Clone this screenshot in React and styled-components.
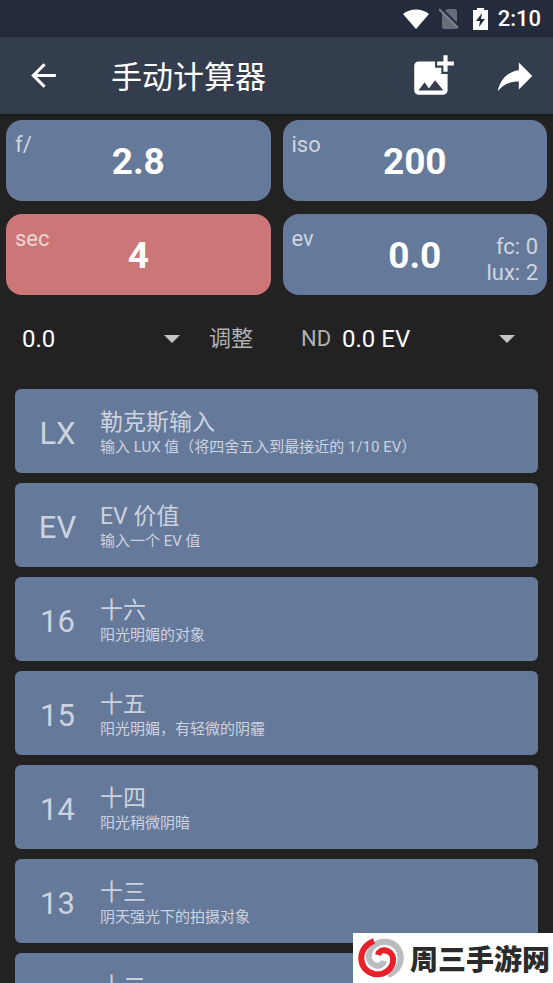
import React from 'react';
import styled, {createGlobalStyle} from 'styled-components';
import {MdAddPhotoAlternate, MdArrowBack} from 'react-icons/md';

const Color = {
    status: '#232b3c',
    bar: '#343d4e',
    page: '#222222',
    card: '#65799b',
    active: '#cb7777',
    soft: '#ccd3df',
    muted: '#b0b0b0'
};

const ROWS = [
    {code: 'LX', title: '勒克斯输入', text: '输入 LUX 值（将四舍五入到最接近的 1/10 EV）'},
    {code: 'EV', title: 'EV 价值', text: '输入一个 EV 值'},
    {code: '16', title: '十六', text: '阳光明媚的对象'},
    {code: '15', title: '十五', text: '阳光明媚，有轻微的阴霾'},
    {code: '14', title: '十四', text: '阳光稍微阴暗'},
    {code: '13', title: '十三', text: '阴天强光下的拍摄对象'},
    {code: '12', title: '十二', text: '阴天'}
];

const Caret = () => (
    <CaretIcon viewBox='0 0 16 8' aria-hidden='true'>
        <path d='M0 0h16L8 8z' fill='#c4c4c4'/>
    </CaretIcon>
);

const StatusIcons = () => (
    <>
        <svg width='26' height='20' viewBox='0 0 26 20' aria-hidden='true'>
            <path d='M0 5C7-1 19-1 26 5L13 20z' fill='#fff'/>
        </svg>
        <svg width='24' height='22' viewBox='0 0 24 22' aria-hidden='true'>
            <path d='M8 1h8q2 0 2 2v16q0 2-2 2H5q-2 0-2-2V6z' fill='#666c78'/>
            <path d='M2 0l18 18' stroke={Color.status} strokeWidth='2'/>
            <path d='M0 1l19 19' stroke='#7b808a' strokeWidth='2'/>
        </svg>
        <svg width='15' height='22' viewBox='0 0 15 22' aria-hidden='true'>
            <path d='M4 0h7v2h4v20H0V2h4z' fill='#fff'/>
            <path d='M9 5L3 13h4l-1 6 6-8H8z' fill={Color.status}/>
        </svg>
    </>
);

const Swirl = () => (
    <svg width='48' height='40' viewBox='0 0 48 40' fill='none' aria-hidden='true'>
        <path d='M31 37C48 31 48 8 31 4 20 2 11 10 12 20c1 8 13 11 15 3' stroke='#b9bdbf' strokeWidth='6'/>
        <path d='M17 3C0 9 0 32 17 36c11 2 20-6 19-16-1-8-13-11-15-3' stroke='#fff' strokeWidth='8'/>
        <path d='M31 37C48 31 48 8 31 4 20 2 11 10 12 20c1 8 13 11 15 3' stroke='#b9bdbf' strokeWidth='5'/>
        <path d='M17 3C0 9 0 32 17 36c11 2 20-6 19-16-1-8-13-11-15-3' stroke='#e8202a' strokeWidth='6'/>
    </svg>
);

const App = () => (
    <Page>
        <GlobalStyle/>
        <StatusBar>
            <StatusIcons/>
            <Clock>2:10</Clock>
        </StatusBar>
        <AppBar>
            <IconButton aria-label='返回'><MdArrowBack size={37}/></IconButton>
            <Heading>手动计算器</Heading>
            <IconButton aria-label='添加图片'><MdAddPhotoAlternate size={50}/></IconButton>
            <IconButton aria-label='分享'>
                <svg width='46' height='46' viewBox='0 0 24 24'>
                    <path d='M14 9V5l7 7-7 7v-4.1c-5 0-8.5 1.6-11 5.1 1-5 4-10 11-11z' fill='#fff'/>
                </svg>
            </IconButton>
        </AppBar>
        <Readings>
            <Reading><Unit>f/</Unit><Value>2.8</Value></Reading>
            <Reading><Unit>iso</Unit><Value>200</Value></Reading>
            <Reading $active><Unit>sec</Unit><Value>4</Value></Reading>
            <Reading>
                <Unit>ev</Unit>
                <Value>0.0</Value>
                <Extra>fc: 0<br/>lux: 2</Extra>
            </Reading>
        </Readings>
        <Adjust>
            <Picker>
                <Select id='adjust'><option>0.0</option></Select>
                <Caret/>
            </Picker>
            <Label htmlFor='adjust'>调整</Label>
            <Label htmlFor='nd'>ND</Label>
            <Picker>
                <Select id='nd'><option>0.0 EV</option></Select>
                <Caret/>
            </Picker>
        </Adjust>
        <List>
            {ROWS.map(row => (
                <Row key={row.code}>
                    <Code>{row.code}</Code>
                    <span>
                        <RowTitle>{row.title}</RowTitle>
                        <RowText>{row.text}</RowText>
                    </span>
                </Row>
            ))}
        </List>
        <Watermark>
            <Swirl/>
            周三手游网
        </Watermark>
    </Page>
);

export default App;

const GlobalStyle = createGlobalStyle`
    * {
        box-sizing: border-box;
    }
    body {
        margin: 0;
        background: ${Color.page};
        font-family: Roboto, "Noto Sans CJK SC", sans-serif;
        color: #fff;
    }
`;

const Page = styled.div`
    display: flex;
    flex-direction: column;
    height: 100vh;
    overflow: hidden;
`;

const StatusBar = styled.div`
    flex: none;
    display: flex;
    align-items: center;
    justify-content: flex-end;
    gap: 10px;
    height: 37px;
    padding-right: 12px;
    background: ${Color.status};
`;

const Clock = styled.time`
    font-size: 22px;
    font-weight: 500;
`;

const AppBar = styled.header`
    flex: none;
    display: flex;
    align-items: center;
    gap: 34px;
    height: 77px;
    padding: 0 15px 0 25px;
    background: ${Color.bar};
    box-shadow: 0 1px 4px rgba(0, 0, 0, .5);
`;

const BaseButton = styled.button`
    border: 0;
    padding: 0;
    background: none;
    font-family: inherit;
    color: #fff;
`;

const IconButton = styled(BaseButton)`
    display: flex;
`;

const Heading = styled.h1`
    flex: 1;
    margin: 0;
    padding: 4px 0 0 15px;
    font-size: 31px;
    font-weight: 400;
    line-height: 40px;
`;

const Readings = styled.section`
    flex: none;
    display: grid;
    grid-template-columns: 1fr 1fr;
    gap: 13px 12px;
    padding: 6px;
`;

const Reading = styled(BaseButton)`
    display: grid;
    grid-template-columns: 1fr auto 1fr;
    height: 81px;
    padding: 0 9px;
    border-radius: 16px;
    background: ${props => props.$active ? Color.active : Color.card};
`;

const Unit = styled.span`
    padding-top: 12px;
    font-size: 22px;
    line-height: 26px;
    text-align: left;
    color: rgba(255, 255, 255, .7);
`;

const Value = styled.strong`
    align-self: center;
    padding-top: 3px;
    font-size: 37px;
    line-height: 44px;
    font-weight: 700;
`;

const Extra = styled(Unit)`
    align-self: end;
    padding: 0 0 9px;
    text-align: right;
`;

const Adjust = styled.section`
    flex: none;
    display: grid;
    grid-template-columns: 158px 121px 41px 1fr;
    align-items: center;
    height: 88px;
    padding: 0 38px 12px 22px;
`;

const Picker = styled.div`
    display: grid;
    align-items: center;
`;

const Select = styled.select`
    grid-area: 1 / 1;
    width: 100%;
    border: 0;
    padding: 0;
    background: none;
    appearance: none;
    font-family: inherit;
    font-size: 24px;
    line-height: 32px;
    color: #fff;
`;

const CaretIcon = styled.svg`
    grid-area: 1 / 1;
    justify-self: end;
    width: 16px;
    height: 8px;
    pointer-events: none;
`;

const Label = styled.label`
    font-size: 22px;
    line-height: 32px;
    color: ${Color.muted};

    &:first-of-type {
        padding-left: 29px;
    }
`;

const List = styled.main`
    flex: 1;
    display: flex;
    flex-direction: column;
    gap: 10px;
    min-height: 0;
    padding: 0 15px;
    overflow: hidden;
`;

const Row = styled(BaseButton)`
    flex: none;
    display: grid;
    grid-template-columns: 85px 1fr;
    align-items: center;
    height: 84px;
    padding-top: 3px;
    border-radius: 6px;
    background: ${Color.card};
    color: ${Color.soft};
    text-align: left;
`;

const Code = styled.span`
    padding-top: 2px;
    font-size: 31px;
    text-align: center;
`;

const RowTitle = styled.span`
    display: block;
    font-size: 23px;
    line-height: 28px;
`;

const RowText = styled.span`
    display: block;
    font-size: 15px;
    line-height: 20px;
`;

const Watermark = styled.div`
    position: fixed;
    right: 0;
    bottom: 0;
    display: flex;
    align-items: center;
    gap: 5px;
    width: 200px;
    height: 50px;
    padding-left: 4px;
    background: #fff;
    color: #2b2b2b;
    font-size: 28px;
    font-weight: 900;
    white-space: nowrap;
`;
